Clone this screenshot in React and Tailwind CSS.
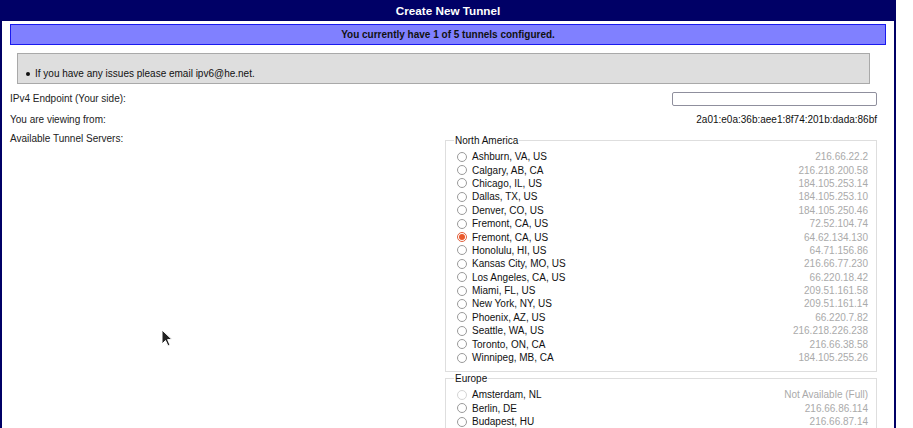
import React from 'react';

const northAmerica = [
  { city: 'Ashburn, VA, US', ip: '216.66.22.2' },
  { city: 'Calgary, AB, CA', ip: '216.218.200.58' },
  { city: 'Chicago, IL, US', ip: '184.105.253.14' },
  { city: 'Dallas, TX, US', ip: '184.105.253.10' },
  { city: 'Denver, CO, US', ip: '184.105.250.46' },
  { city: 'Fremont, CA, US', ip: '72.52.104.74' },
  { city: 'Fremont, CA, US', ip: '64.62.134.130', checked: true },
  { city: 'Honolulu, HI, US', ip: '64.71.156.86' },
  { city: 'Kansas City, MO, US', ip: '216.66.77.230' },
  { city: 'Los Angeles, CA, US', ip: '66.220.18.42' },
  { city: 'Miami, FL, US', ip: '209.51.161.58' },
  { city: 'New York, NY, US', ip: '209.51.161.14' },
  { city: 'Phoenix, AZ, US', ip: '66.220.7.82' },
  { city: 'Seattle, WA, US', ip: '216.218.226.238' },
  { city: 'Toronto, ON, CA', ip: '216.66.38.58' },
  { city: 'Winnipeg, MB, CA', ip: '184.105.255.26' },
];

const europe = [
  { city: 'Amsterdam, NL', ip: 'Not Available (Full)', disabled: true },
  { city: 'Berlin, DE', ip: '216.66.86.114' },
  { city: 'Budapest, HU', ip: '216.66.87.14' },
];

const Radio = ({ checked, disabled }) => {
  if (checked) {
    return (
      <span className="w-[10px] h-[10px] rounded-full border border-[#e2603c] flex items-center justify-center shrink-0">
        <span className="w-[6px] h-[6px] rounded-full bg-[#e9582a]" />
      </span>
    );
  }
  return (
    <span
      className={
        disabled
          ? 'w-[10px] h-[10px] rounded-full border border-[#d4d4d4] shrink-0'
          : 'w-[10px] h-[10px] rounded-full border border-[#9a9a9a] shrink-0'
      }
    />
  );
};

const ServerGroup = ({ name, servers, className }) => (
  <fieldset className={`border border-[#dedede] pb-[7px] ${className}`}>
    <legend className="ml-[8px] px-[1px] text-[10px] leading-[13px] text-[#111]">{name}</legend>
    <div className="pt-[3px] pl-[11px] pr-[8px]">
      {servers.map((s, i) => (
        <div key={i} className="h-[13.4px] flex items-center">
          <Radio checked={s.checked} disabled={s.disabled} />
          <span className="ml-[5px] text-[#111]">{s.city}</span>
          <span className="ml-auto text-[#aaaaaa]">{s.ip}</span>
        </div>
      ))}
    </div>
  </fieldset>
);

const App = () => {
  return (
    <div
      className="relative w-[896px] h-[428px] overflow-hidden border-x-2 border-[#000066] bg-white text-[10px] leading-[13px] text-[#222]"
      style={{ fontFamily: '"Liberation Sans", Arial, sans-serif' }}
    >
      <div className="h-[21px] bg-[#000066] text-white text-[11.7px] font-bold flex items-center justify-center">
        Create New Tunnel
      </div>

      <div className="px-[8px]">
        <div className="mt-[3px] h-[21px] bg-[#8080ff] border border-[#1a1aee] font-bold text-[#111] flex items-center justify-center">
          You currently have 1 of 5 tunnels configured.
        </div>

        <div className="mt-[8px] ml-[7px] w-[853px] h-[31px] bg-[#dedede] border border-[#a9a9a9] pt-[13px]">
          <div className="flex items-center pl-[8px]">
            <span className="w-[4px] h-[4px] rounded-full bg-[#111]" />
            <span className="ml-[5px] text-[#111]">If you have any issues please email ipv6@he.net.</span>
          </div>
        </div>

        <div className="w-[867px]">
          <div className="mt-[6px] h-[17px] flex items-center justify-between">
            <span>IPv4 Endpoint (Your side):</span>
            <input type="text" className="w-[205px] h-[14px] border border-[#8f8f9d] rounded-[2px] bg-white" />
          </div>
          <div className="h-[25px] flex items-center justify-between">
            <span>You are viewing from:</span>
            <span className="text-[#111]">2a01:e0a:36b:aee1:8f74:201b:dada:86bf</span>
          </div>
          <div className="flex">
            <div className="w-[435px]">Available Tunnel Servers:</div>
            <div className="w-[432px] mt-[2px]">
              <ServerGroup name="North America" servers={northAmerica} />
              <ServerGroup name="Europe" servers={europe} />
            </div>
          </div>
        </div>
      </div>

      <svg className="absolute left-[159px] top-[329px]" width="12" height="19" viewBox="0 0 12 19">
        <path d="M1 1 L1 15 L4.5 11.5 L7 17 L9 16 L6.6 10.6 L11 10.6 Z" fill="#222" stroke="#fff" strokeWidth="1" />
      </svg>
    </div>
  );
};

export default App;
